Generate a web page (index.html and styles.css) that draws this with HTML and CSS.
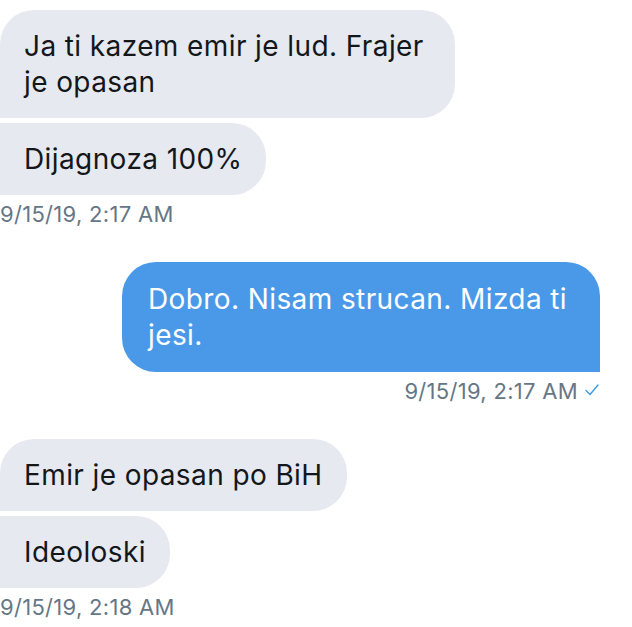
FILE: index.html
```html
<!DOCTYPE html>
<html lang="en">
<head>
<meta charset="UTF-8">
<meta name="viewport" content="width=device-width, initial-scale=1.0">
<title>Messages</title>
<link rel="stylesheet" href="styles.css">
</head>
<body>
<div class="thread">
    <div class="group in">
        <div class="bubble first">Ja ti kazem emir je lud. Frajer je opasan</div>
        <div class="bubble">Dijagnoza 100%</div>
        <div class="time">9/15/19, 2:17 AM</div>
    </div>

    <div class="group out">
        <div class="bubble">Dobro. Nisam strucan. Mizda ti jesi.</div>
        <div class="time">9/15/19, 2:17 AM
            <svg class="check" width="16" height="14" viewBox="0 0 16 14"><polyline points="2,7.5 6,11.5 14,2" fill="none" stroke="#3a9ce8" stroke-width="1.4" stroke-linecap="round" stroke-linejoin="round"/></svg>
        </div>
    </div>

    <div class="group in">
        <div class="bubble first">Emir je opasan po BiH</div>
        <div class="bubble">Ideoloski</div>
        <div class="time">9/15/19, 2:18 AM</div>
    </div>
</div>
</body>
</html>
```

FILE: styles.css
```css
body {
    font-family: Inter, "Liberation Sans", sans-serif;
    background-color: #fff;
    margin: 0;
    padding: 0;
}

.thread {
    padding: 10px 32px 0 0;
}

.group {
    display: flex;
    flex-direction: column;
    gap: 5px;
}

.group + .group {
    margin-top: 35px;
}

.in {
    align-items: flex-start;
}

.out {
    align-items: flex-end;
}

.bubble {
    box-sizing: border-box;
    padding: 18px 24px;
    font-size: 28px;
    line-height: 36px;
    letter-spacing: 0.4px;
}

.in .bubble {
    background-color: #e6e9f0;
    color: #14171a;
    border-radius: 0 34px 34px 0;
    max-width: 455px;
}

.in .bubble.first {
    border-top-left-radius: 34px;
}

.out .bubble {
    background-color: #4a99e9;
    color: #fff;
    border-radius: 34px 34px 0 34px;
    max-width: 478px;
    padding: 19px 24px 19px 26px;
}

.time {
    margin-top: 1px;
    font-size: 22px;
    line-height: 26px;
    letter-spacing: 0.3px;
    color: #657786;
    display: flex;
    align-items: center;
    gap: 6px;
}

.check {
    margin-top: -2px;
}
```
